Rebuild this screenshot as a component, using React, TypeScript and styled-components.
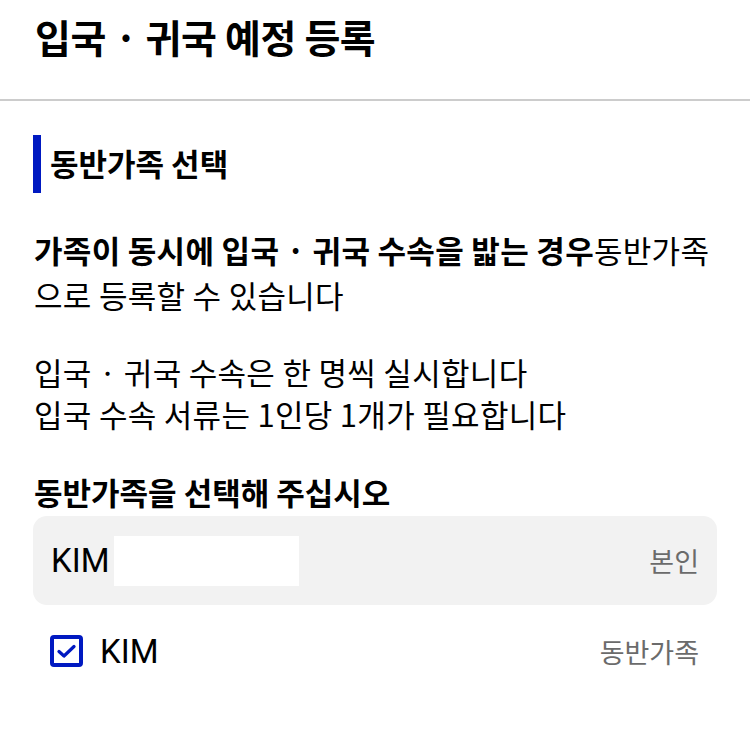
import React, { useState } from "react";
import styled, { createGlobalStyle } from "styled-components";

const GlobalStyle = createGlobalStyle`
    html, body {
        margin: 0;
        padding: 0;
        background: #fff;
    }
    body {
        font-family: Roboto, "Noto Sans CJK KR", sans-serif;
        color: #000;
    }
`;

const BLUE = "#0019c1";

const Header = styled.header`
    height: 101px;
    display: flex;
    align-items: center;
    padding: 0 35px 27px;
    box-sizing: border-box;
    border-bottom: 2px solid #cccccc;
`;

const Title = styled.h1`
    margin: 0;
    font-family: "Noto Sans CJK KR", sans-serif;
    font-size: 39px;
    font-weight: 700;
    letter-spacing: -0.4px;
`;

const Content = styled.main`
    padding: 0 33px;
`;

const SectionTitle = styled.h2`
    margin: 34px 0 0;
    height: 58px;
    display: flex;
    align-items: center;
    border-left: 8px solid ${BLUE};
    padding: 0 0 4px 9px;
    box-sizing: border-box;
    font-family: "Noto Sans CJK KR", sans-serif;
    font-size: 31px;
    font-weight: 700;
`;

const Paragraph = styled.p<{ $top: number; $lh: number }>`
    margin: ${(p) => p.$top}px 0 0;
    padding-left: 1px;
    font-family: "Noto Sans CJK KR", sans-serif;
    font-size: 31px;
    line-height: ${(p) => p.$lh}px;
    letter-spacing: 0.3px;
    font-weight: 400;

    strong {
        font-weight: 700;
    }
`;

const Label = styled.h3`
    margin: 36px 0 0;
    padding-left: 1px;
    font-family: "Noto Sans CJK KR", sans-serif;
    font-size: 31px;
    line-height: 42px;
    font-weight: 700;
`;

const SelfCard = styled.div`
    margin-top: 3px;
    height: 89px;
    display: flex;
    align-items: center;
    padding: 0 18px;
    background: #f2f2f2;
    border-radius: 14px;
`;

const Name = styled.span`
    font-family: Roboto, "Noto Sans CJK KR", sans-serif;
    font-size: 33px;
    color: #000;
`;

const Masked = styled.span`
    display: inline-block;
    width: 185px;
    height: 50px;
    margin-left: 4px;
    background: #fff;
`;

const Relation = styled.span`
    margin-left: auto;
    font-family: "Noto Sans CJK KR", sans-serif;
    font-size: 27px;
    color: #6b6b6b;
`;

const MemberRow = styled.label`
    height: 92px;
    display: flex;
    align-items: center;
    padding: 0 18px 0 17px;
    cursor: pointer;
`;

const CheckBox = styled.span<{ $checked: boolean }>`
    width: 33px;
    height: 32px;
    box-sizing: border-box;
    border: 4px solid ${BLUE};
    border-radius: 4px;
    display: flex;
    align-items: center;
    justify-content: center;
    margin-right: 17px;
    background: #fff;

    svg {
        visibility: ${(p) => (p.$checked ? "visible" : "hidden")};
    }
`;

const App = () => {
    const [checked, setChecked] = useState(true);

    return (
        <>
            <GlobalStyle />
            <Header>
                <Title>입국 · 귀국 예정 등록</Title>
            </Header>
            <Content>
                <SectionTitle>동반가족 선택</SectionTitle>
                <Paragraph $top={34} $lh={45}>
                    <strong>가족이 동시에 입국 · 귀국 수속을 밟는 경우</strong>동반가족
                    <br />
                    으로 등록할 수 있습니다
                </Paragraph>
                <Paragraph $top={34} $lh={42}>
                    입국 · 귀국 수속은 한 명씩 실시합니다
                    <br />
                    입국 수속 서류는 1인당 1개가 필요합니다
                </Paragraph>
                <Label>동반가족을 선택해 주십시오</Label>
                <SelfCard>
                    <Name>KIM</Name>
                    <Masked />
                    <Relation>본인</Relation>
                </SelfCard>
                <MemberRow onClick={() => setChecked(!checked)}>
                    <CheckBox $checked={checked}>
                        <svg width="19" height="15" viewBox="0 0 19 15">
                            <path
                                d="M2 7.5 L7 12 L17 2.5"
                                fill="none"
                                stroke={BLUE}
                                strokeWidth="3.2"
                                strokeLinecap="round"
                                strokeLinejoin="round"
                            />
                        </svg>
                    </CheckBox>
                    <Name>KIM</Name>
                    <Relation>동반가족</Relation>
                </MemberRow>
            </Content>
        </>
    );
};

export default App;
